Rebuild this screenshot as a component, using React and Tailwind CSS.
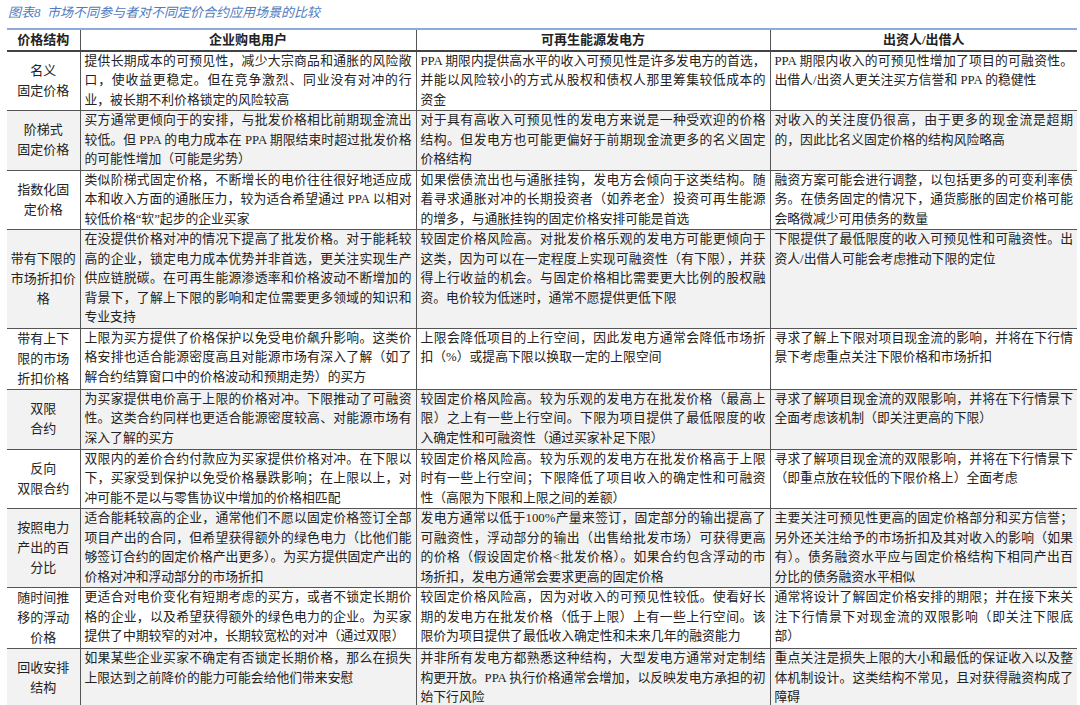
const rows = [
  ["名义\n固定价格", 60, "提供长期成本的可预见性，减少大宗商品和通胀的风险敞口，使收益更稳定。但在竞争激烈、同业没有对冲的行业，被长期不利价格锁定的风险较高", "PPA 期限内提供高水平的收入可预见性是许多发电方的首选，并能以风险较小的方式从股权和债权人那里筹集较低成本的资金", "PPA  期限内收入的可预见性增加了项目的可融资性。出借人/出资人更关注买方信誉和 PPA 的稳健性"],
  ["阶梯式\n固定价格", 59, "买方通常更倾向于的安排，与批发价格相比前期现金流出较低。但 PPA 的电力成本在 PPA 期限结束时超过批发价格的可能性增加（可能是劣势）", "对于具有高收入可预见性的发电方来说是一种受欢迎的价格结构。但发电方也可能更偏好于前期现金流更多的名义固定价格结构", "对收入的关注度仍很高，由于更多的现金流是超期的，因此比名义固定价格的结构风险略高"],
  ["指数化固\n定价格", 58, "类似阶梯式固定价格，不断增长的电价往往很好地适应成本和收入方面的通胀压力，较为适合希望通过 PPA 以相对较低价格“软”起步的企业买家", "如果偿债流出也与通胀挂钩，发电方会倾向于这类结构。随着寻求通胀对冲的长期投资者（如养老金）投资可再生能源的增多，与通胀挂钩的固定价格安排可能是首选", "融资方案可能会进行调整，以包括更多的可变利率债务。在债务固定的情况下，通货膨胀的固定价格可能会略微减少可用债务的数量"],
  ["带有下限的\n市场折扣价\n格", 90, "在没提供价格对冲的情况下提高了批发价格。对于能耗较高的企业，锁定电力成本优势并非首选，更关注实现生产供应链脱碳。在可再生能源渗透率和价格波动不断增加的背景下，了解上下限的影响和定位需要更多领域的知识和专业支持", "较固定价格风险高。对批发价格乐观的发电方可能更倾向于这类，因为可以在一定程度上实现可融资性（有下限），并获得上行收益的机会。与固定价格相比需要更大比例的股权融资。电价较为低迷时，通常不愿提供更低下限", "下限提供了最低限度的收入可预见性和可融资性。出资人/出借人可能会考虑推动下限的定位"],
  ["带有上下\n限的市场\n折扣价格", 60, "上限为买方提供了价格保护以免受电价飙升影响。这类价格安排也适合能源密度高且对能源市场有深入了解（如了解合约结算窗口中的价格波动和预期走势）的买方", "上限会降低项目的上行空间，因此发电方通常会降低市场折扣（%）或提高下限以换取一定的上限空间", "寻求了解上下限对项目现金流的影响，并将在下行情景下考虑重点关注下限价格和市场折扣"],
  ["双限\n合约", 60, "为买家提供电价高于上限的价格对冲。下限推动了可融资性。这类合约同样也更适合能源密度较高、对能源市场有深入了解的买方", "较固定价格风险高。较为乐观的发电方在批发价格（最高上限）之上有一些上行空间。下限为项目提供了最低限度的收入确定性和可融资性（通过买家补足下限）", "寻求了解项目现金流的双限影响，并将在下行情景下全面考虑该机制（即关注更高的下限）"],
  ["反向\n双限合约", 58, "双限内的差价合约付款应为买家提供价格对冲。在下限以下，买家受到保护以免受价格暴跌影响；在上限以上，对冲可能不是以与零售协议中增加的价格相匹配", "较固定价格风险高。较为乐观的发电方在批发价格高于上限时有一些上行空间；下限降低了项目收入的确定性和可融资性（高限为下限和上限之间的差额）", "寻求了解项目现金流的双限影响，并将在下行情景下（即重点放在较低的下限价格上）全面考虑"],
  ["按照电力\n产出的百\n分比", 75, "适合能耗较高的企业，通常他们不愿以固定价格签订全部项目产出的合同，但希望获得额外的绿色电力（比他们能够签订合约的固定价格产出更多）。为买方提供固定产出的价格对冲和浮动部分的市场折扣", "发电方通常以低于100%产量来签订，固定部分的输出提高了可融资性，浮动部分的输出（出售给批发市场）可获得更高的价格（假设固定价格<批发价格）。如果合约包含浮动的市场折扣，发电方通常会要求更高的固定价格", "主要关注可预见性更高的固定价格部分和买方信誉；另外还关注给予的市场折扣及其对收入的影响（如果有）。债务融资水平应与固定价格结构下相同产出百分比的债务融资水平相似"],
  ["随时间推\n移的浮动\n价格", 59, "更适合对电价变化有短期考虑的买方，或者不锁定长期价格的企业，以及希望获得额外的绿色电力的企业。为买家提供了中期较窄的对冲，长期较宽松的对冲（通过双限）", "较固定价格风险高，因为对收入的可预见性较低。使看好长期的发电方在批发价格（低于上限）上有一些上行空间。该限价为项目提供了最低收入确定性和未来几年的融资能力", "通常将设计了解固定价格安排的期限；并在接下来关注下行情景下对现金流的双限影响（即关注下限底部）"],
  ["回收安排\n结构", 59, "如果某些企业买家不确定有否锁定长期价格，那么在损失上限达到之前降价的能力可能会给他们带来安慰", "并非所有发电方都熟悉这种结构，大型发电方通常对定制结构更开放。PPA 执行价格通常会增加，以反映发电方承担的初始下行风险", "重点关注是损失上限的大小和最低的保证收入以及整体机制设计。这类结构不常见，且对获得融资构成了障碍"],
];

export default function App() {
  return (
    <div className="w-[1080px] h-[705px] bg-white overflow-hidden relative" style={{ fontFamily: '"Liberation Serif", "Noto Sans CJK SC", serif' }}>
      <div className="pl-[8px] pt-[3px] h-[28px] text-[13px] italic text-[#4f7bbf]">图表8&nbsp; 市场不同参与者对不同定价合约应用场景的比较</div>
      <table className="ml-[7px] w-[1070px] border-collapse table-fixed text-[12.8px] leading-[19.5px] text-[#222]">
        <colgroup>
          <col className="w-[73px]" />
          <col className="w-[336px]" />
          <col className="w-[354px]" />
          <col className="w-[307px]" />
        </colgroup>
        <thead>
          <tr className="h-[21px] border-t-2 border-t-[#8eaadb] border-b-2 border-b-[#444] font-bold text-[13px]">
            <th className="border-r border-[#555] text-center">价格结构</th>
            <th className="border-r border-[#555] text-center">企业购电用户</th>
            <th className="border-r border-[#555] text-center">可再生能源发电方</th>
            <th className="text-center">出资人/出借人</th>
          </tr>
        </thead>
        <tbody>
          {rows.map((r, i) => (
            <tr key={i} style={{ height: r[1] }} className={(i % 2 ? "bg-[#f2f2f2]" : "bg-white") + " border-b border-[#555] align-top"}>
              <td className="border-r border-[#555] text-center align-middle whitespace-pre-line text-[13px] leading-[20px] px-0">{r[0]}</td>
              <td className="border-r border-[#555] px-[4px] text-justify">{r[2]}</td>
              <td className="border-r border-[#555] px-[4px] text-justify">{r[3]}</td>
              <td className="px-[4px] text-justify">{r[4]}</td>
            </tr>
          ))}
        </tbody>
      </table>
      <div className="text-right pr-[8px] pt-[2px] text-[11.5px] italic text-[#4f7bbf]">资料来源：Pricing structures for corporate renewable PPAs，长城证券产业金融研究院整理</div>
    </div>
  );
}
